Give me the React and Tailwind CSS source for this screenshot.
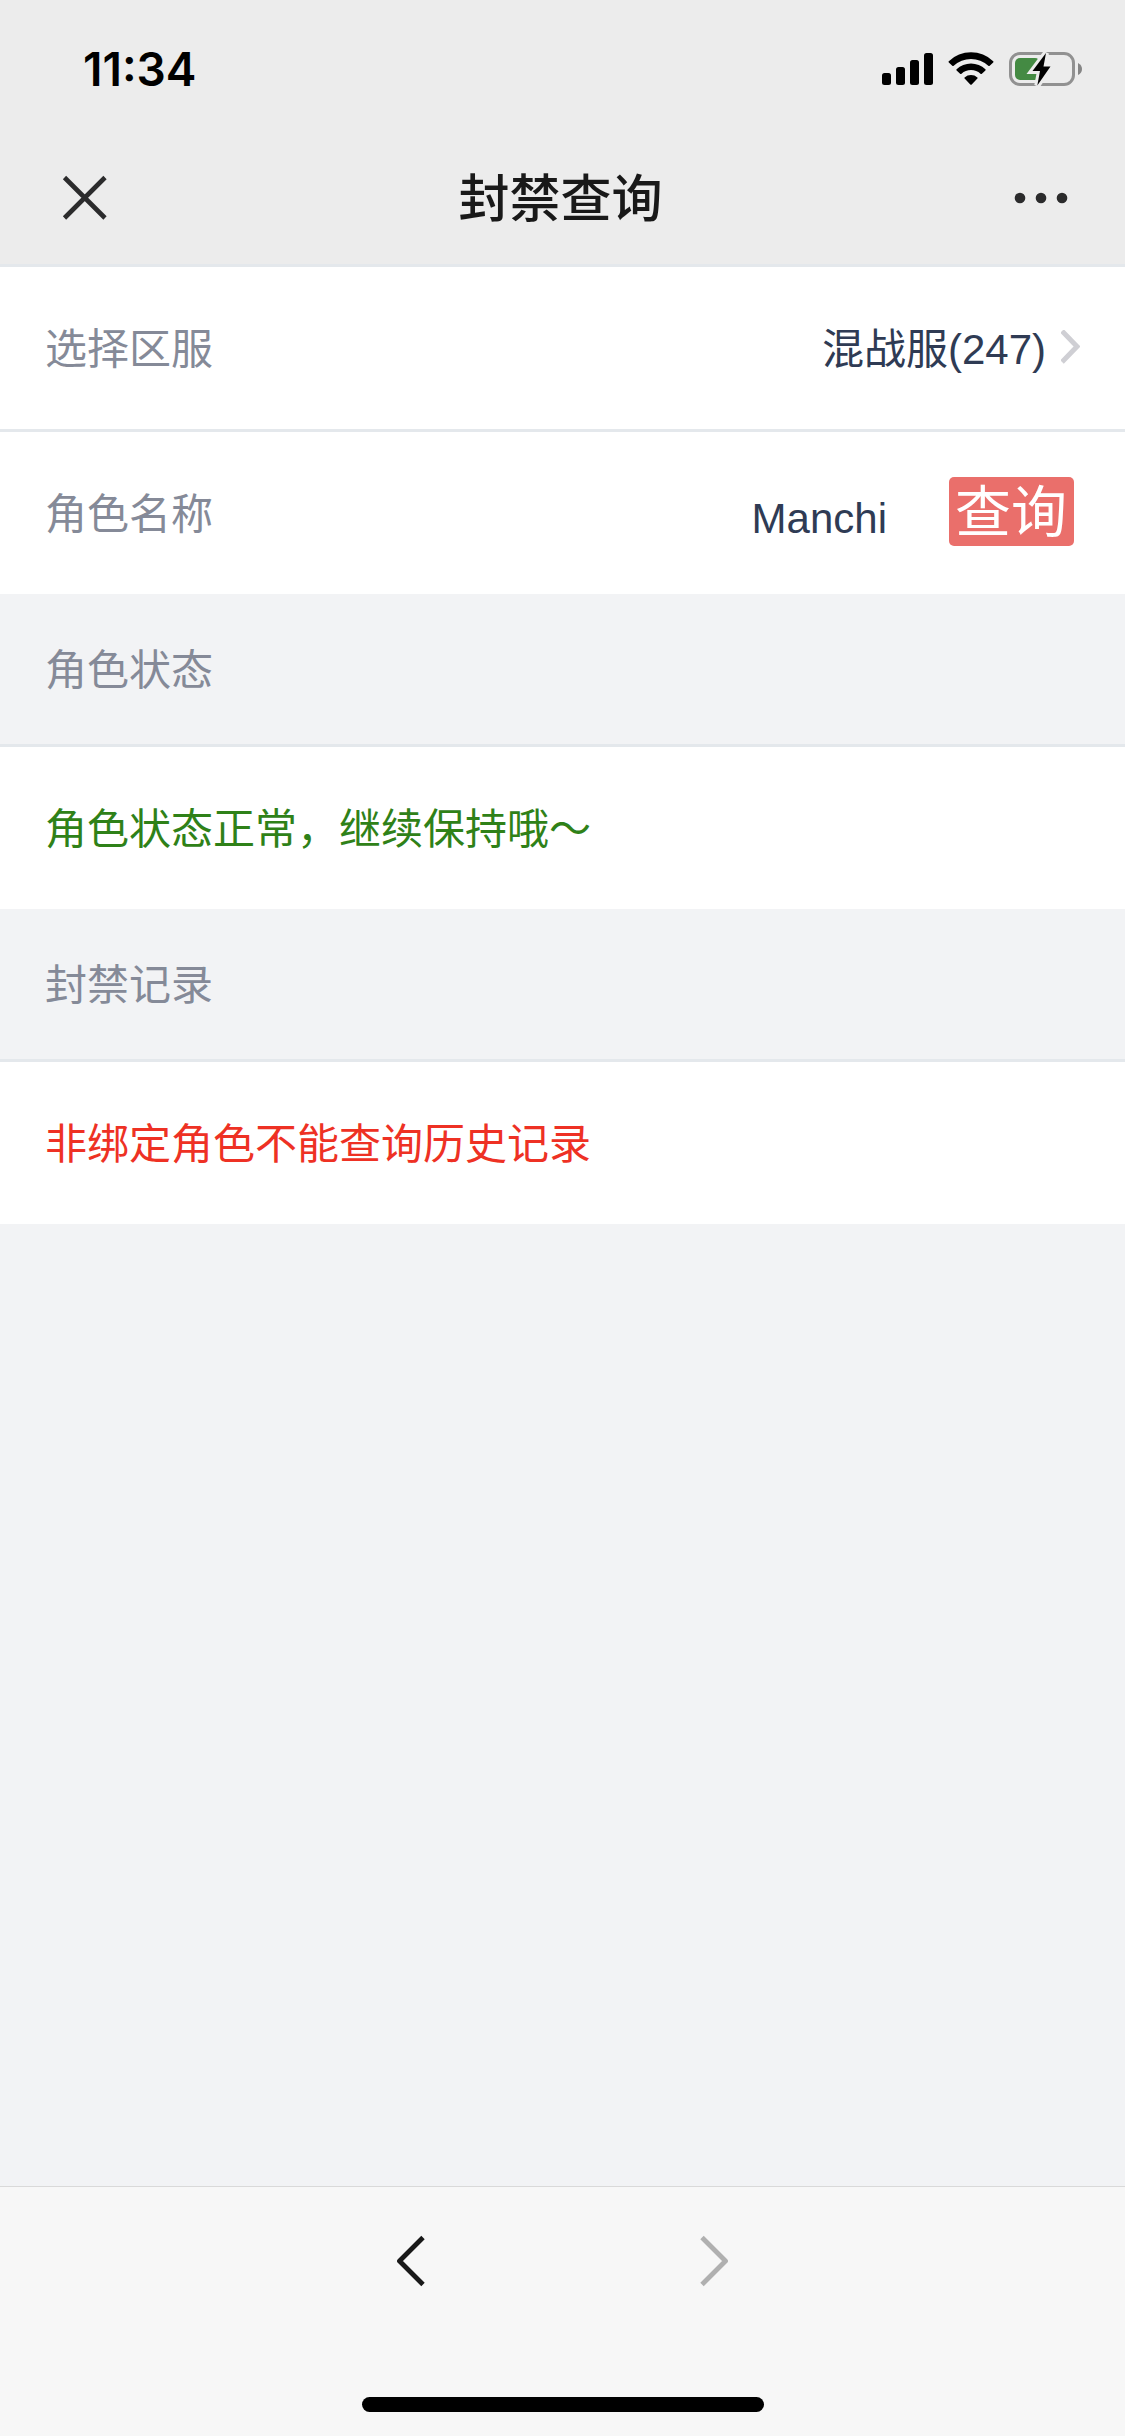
import { useState } from 'react'

const SERVERS = ['混战服(247)']

function SignalIcon() {
  return (
    <svg width="51" height="32" viewBox="0 0 51 32" aria-hidden="true">
      <rect x="0" y="20" width="9" height="12" rx="2.5" />
      <rect x="14" y="14" width="9" height="18" rx="2.5" />
      <rect x="28" y="7" width="9" height="25" rx="2.5" />
      <rect x="42" y="0" width="9" height="32" rx="2.5" />
    </svg>
  )
}

function WifiIcon() {
  return (
    <svg width="46" height="34" viewBox="0 0 46 34" aria-hidden="true">
      <path d="M.8 9.2A32 32 0 0 1 45.2 9.2Q45.8 9.8 45.2 10.4L41.7 13.8Q41 14.4 40.3 13.8A25.5 25.5 0 0 0 5.7 13.8Q5 14.4 4.3 13.8L.8 10.4Q.2 9.8 .8 9.2Z" />
      <path d="M8.6 17.2A20.8 20.8 0 0 1 37.4 17.2Q38 17.8 37.4 18.4L33.9 21.8Q33.2 22.4 32.5 21.8A14 14 0 0 0 13.5 21.8Q12.8 22.4 12.1 21.8L8.6 18.4Q8 17.8 8.6 17.2Z" />
      <path d="M16.6 25.4A9.6 9.6 0 0 1 29.4 25.4Q30 26 29.4 26.6L23.7 32.4Q23 33 22.3 32.4L16.6 26.6Q16 26 16.6 25.4Z" />
    </svg>
  )
}

function BatteryIcon() {
  return (
    <svg width="74" height="34" viewBox="0 0 74 34" aria-hidden="true">
      <rect x="1.5" y="1.5" width="63" height="31" rx="9.5" fill="none" stroke="#919191" strokeWidth="3" />
      <path d="M69 11Q73 13 73 17T69 23Z" fill="#858585" />
      <rect x="6" y="6" width="25" height="22" rx="5" fill="#448a43" />
      <path
        d="M37 1L23.5 19H31L28.3 33.5L41.5 14.5H34.5Z"
        stroke="#ececec"
        strokeWidth="6"
        paintOrder="stroke"
      />
    </svg>
  )
}

function Chevron({ direction = 'right' }) {
  return (
    <svg
      width="28"
      height="52"
      viewBox="0 0 28 52"
      fill="none"
      stroke="currentColor"
      strokeWidth="4.8"
      strokeLinejoin="round"
      aria-hidden="true"
    >
      <path d={direction === 'left' ? 'M26 2.5L2.5 26L26 49.5' : 'M2 2.5L25.5 26L2 49.5'} />
    </svg>
  )
}

function StatusBar() {
  return (
    <div className="flex h-[132px] items-center justify-between pt-[6px] pr-[42px] pl-[83px]">
      <time className="font-['Inter',sans-serif] text-[46px] leading-[48px] font-semibold text-black">11:34</time>
      <div className="flex items-center gap-[15px]">
        <SignalIcon />
        <WifiIcon />
        <BatteryIcon />
      </div>
    </div>
  )
}

function NavBar() {
  return (
    <div className="grid h-[132px] grid-cols-3 items-center px-[57px]">
      <button type="button" aria-label="关闭" className="justify-self-start">
        <svg width="54" height="50" viewBox="0 0 54 50" fill="none" stroke="#2b2b2c" strokeWidth="4.6" aria-hidden="true">
          <path d="M7.5 4.5L48 45M48 4.5L7.5 45" />
        </svg>
      </button>
      <h1 className="pt-[4px] pr-[4px] text-center text-[51px] leading-[60px] font-medium text-[#191919]">封禁查询</h1>
      <button type="button" aria-label="更多" className="justify-self-end">
        <svg width="54" height="24" viewBox="0 0 54 24" fill="#2b2b2c" aria-hidden="true">
          <circle cx="6" cy="12" r="5.3" />
          <circle cx="27" cy="12" r="5.3" />
          <circle cx="48" cy="12" r="5.3" />
        </svg>
      </button>
    </div>
  )
}

function SectionTitle({ children }) {
  return (
    <h2 className="border-b-[3px] border-[#e4e8ec] px-[45px] pt-[47px] pb-[43px] text-[42px] leading-[60px] text-[#858a98]">
      {children}
    </h2>
  )
}

function Message({ className, children }) {
  return <p className={`bg-white px-[45px] pt-[53px] pb-[49px] text-[42px] leading-[60px] ${className}`}>{children}</p>
}

export default function App() {
  const [server, setServer] = useState(SERVERS[0])
  const [roleName, setRoleName] = useState('Manchi')

  return (
    <div className="flex min-h-screen flex-col bg-[#f2f3f5] font-['Liberation_Sans','Noto_Sans_CJK_SC',sans-serif]">
      <header className="border-b-[3px] border-[#e4e8ec] bg-[#ececec]">
        <StatusBar />
        <NavBar />
      </header>

      <main className="flex-1">
        <form onSubmit={e => e.preventDefault()}>
          <div className="flex items-center border-b-[3px] border-[#e4e8ec] bg-white px-[45px] pt-[53px] pb-[49px] text-[42px] leading-[60px]">
            <label htmlFor="server" className="text-[#858a98]">选择区服</label>
            <select
              id="server"
              value={server}
              onChange={e => setServer(e.target.value)}
              className="ml-auto h-[60px] appearance-none bg-transparent text-[#2f3b54] outline-none"
            >
              {SERVERS.map(s => (
                <option key={s}>{s}</option>
              ))}
            </select>
            <svg className="ml-[14px]" width="19" height="40" viewBox="0 0 19 40" fill="none" stroke="#cfcfd4" strokeWidth="5" aria-hidden="true">
              <path d="M1 1L16 16.5L1 32" />
            </svg>
          </div>

          {/* Role name and search */}
          <div className="flex h-[162px] items-center bg-white pr-[51px] pl-[45px] text-[42px] leading-[60px]">
            <label htmlFor="role" className="pt-[4px] text-[#858a98]">角色名称</label>
            <input
              id="role"
              type="text"
              value={roleName}
              onChange={e => setRoleName(e.target.value)}
              className="min-w-0 flex-1 bg-transparent pt-[12px] text-right text-[#2f3b54] outline-none"
            />
            <button
              type="submit"
              className="mb-[4px] ml-[62px] rounded-[5px] bg-[#ea6f6b] pt-[3px] pr-[7px] pl-[6px] text-[56px] leading-[66px] text-white"
            >
              查询
            </button>
          </div>
        </form>

        <SectionTitle>角色状态</SectionTitle>
        <Message className="text-[#2f8118]">角色状态正常，继续保持哦～</Message>

        <SectionTitle>封禁记录</SectionTitle>
        <Message className="text-[#ee3124]">非绑定角色不能查询历史记录</Message>
      </main>

      <footer className="border-t border-[#d9d9d9] bg-[#f7f7f7]">
        <nav className="flex h-[147px] items-center justify-center gap-[275px]">
          <button type="button" aria-label="后退" className="text-[#191919]">
            <Chevron direction="left" />
          </button>
          <button type="button" aria-label="前进" disabled className="text-[#b0b0b0]">
            <Chevron />
          </button>
        </nav>
        <div className="flex justify-center pt-[63px] pb-[24px]">
          <div className="h-[15px] w-[402px] rounded-full bg-black" />
        </div>
      </footer>
    </div>
  )
}
